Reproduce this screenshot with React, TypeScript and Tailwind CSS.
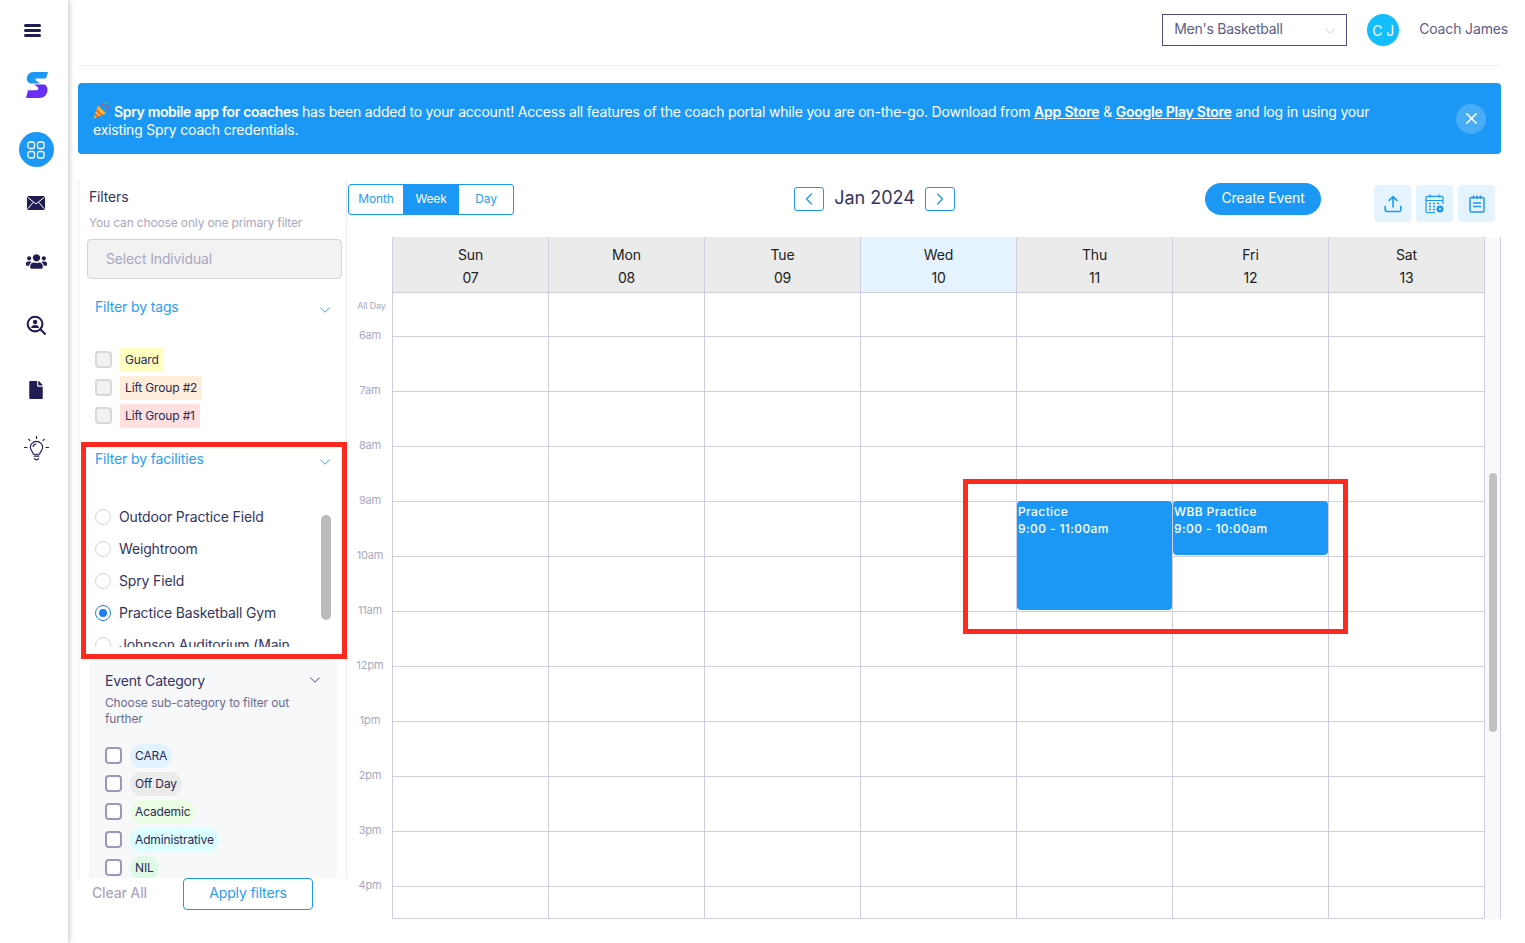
import { ChevronDown, ChevronLeft, ChevronRight, X } from "lucide-react";
import { FaFile, FaUsers } from "react-icons/fa";

const days = [
  { name: "Sun", date: "07" },
  { name: "Mon", date: "08" },
  { name: "Tue", date: "09" },
  { name: "Wed", date: "10", today: true },
  { name: "Thu", date: "11" },
  { name: "Fri", date: "12" },
  { name: "Sat", date: "13" },
];
const hours = ["6am", "7am", "8am", "9am", "10am", "11am", "12pm", "1pm", "2pm", "3pm", "4pm"];
const tags = [
  { label: "Guard", bg: "bg-[#ffffc2]" },
  { label: "Lift Group #2", bg: "bg-[#ffecd9]" },
  { label: "Lift Group #1", bg: "bg-[#ffdfdf]" },
];
const facilities = ["Outdoor Practice Field", "Weightroom", "Spry Field", "Practice Basketball Gym", "Johnson Auditorium (Main"];
const categories = [
  { label: "CARA", bg: "bg-[#e3f2ff]" },
  { label: "Off Day", bg: "bg-[#ebebeb]" },
  { label: "Academic", bg: "bg-[#eafde3]" },
  { label: "Administrative", bg: "bg-[#dcfdff]" },
  { label: "NIL", bg: "bg-[#e0f9e6]" },
];

const Logo = () => (
  <svg width="22" height="26" viewBox="0 0 22 26">
    <path d="M8 0H22L20 6.5H10.5C9.3 6.5 9 8 10 8.6L14 11.5H4.5C1 10 0 7 1.2 4.4C2.3 1.5 4.5 0 8 0Z" fill="#1b98f5" />
    <path d="M0 26H13.5C18 26 21 23 21.5 18.5C21.8 15.5 20.5 13.5 18.5 12.5H8L11.5 15C13 16.2 12.5 18.3 10.5 18.3H2Z" fill="#6a2ff5" />
  </svg>
);

const GridIcon = () => (
  <svg width="18" height="18" viewBox="0 0 18 18" fill="none" stroke="#fff" strokeWidth="1.3">
    <rect x="1" y="1" width="6.5" height="6.5" rx="2" />
    <rect x="10.5" y="1" width="6.5" height="6.5" rx="2" />
    <rect x="1" y="10.5" width="6.5" height="6.5" rx="2" />
    <rect x="10.5" y="10.5" width="6.5" height="6.5" rx="2" />
  </svg>
);

const MailIcon = () => (
  <svg width="18" height="14" viewBox="0 0 18 14">
    <rect width="18" height="14" rx="2" fill="#1f1d53" />
    <path d="M1 1.5L9 8L17 1.5M1 12.5L6.3 6.2M17 12.5L11.7 6.2" fill="none" stroke="#fff" strokeWidth="1" />
  </svg>
);

const SearchPersonIcon = () => (
  <svg width="21" height="21" viewBox="0 0 22 22" fill="none">
    <circle cx="9.5" cy="9.5" r="7.7" stroke="#1f1d53" strokeWidth="2.2" />
    <circle cx="9.5" cy="7.3" r="2.3" fill="#1f1d53" />
    <path d="M5.3 13.5C5.6 11.4 7.3 10.6 9.5 10.6C11.7 10.6 13.4 11.4 13.7 13.5Z" fill="#1f1d53" />
    <path d="M15.2 15.2L20.5 20.5" stroke="#1f1d53" strokeWidth="2.2" />
  </svg>
);

const BulbIcon = () => (
  <svg width="25" height="25" viewBox="0 0 26 26" fill="none" stroke="#1f1d53" strokeWidth="1.2">
    <path d="M9.8 19C9.5 16.5 6.6 15 6.6 11.8C6.6 8.3 9.5 5.6 13 5.6C16.5 5.6 19.4 8.3 19.4 11.8C19.4 15 16.5 16.5 16.2 19Z" />
    <path d="M10 21H16M10.8 23C11.5 25.5 14.5 25.5 15.2 23M13 0V3M4.5 3L6.5 5M21.5 3L19.5 5M0 12H3.5M22.5 12H26" />
    <path d="M9.5 11.5C9.6 9.6 11 8.4 12.8 8.3" />
  </svg>
);

const PartyIcon = () => (
  <svg className="inline-block align-[-2px] mr-[3px]" width="18" height="18" viewBox="0 0 18 18">
    <path d="M0.5 17.5L5 4.5L13 12.5Z" fill="#f7b733" />
    <path d="M2.2 12.6L7 15.5L5 16.2L1.6 14.4ZM3.8 8L10.4 14.4L8.6 15L3.1 10Z" fill="#e2612c" />
    <path d="M9 2L10 5M12 7L16 4M13 10L17 11" stroke="#d9455f" strokeWidth="1.2" />
    <circle cx="13" cy="2" r="1" fill="#7ac143" />
    <circle cx="16" cy="8" r="1" fill="#8e5bd0" />
    <circle cx="6.5" cy="1.5" r="0.8" fill="#3d8fd9" />
  </svg>
);

const UploadIcon = () => (
  <svg width="18" height="18" viewBox="0 0 18 18" fill="none" stroke="#1b98f5" strokeWidth="1.6" strokeLinecap="round" strokeLinejoin="round">
    <path d="M9 12V1.8M5.2 5.4L9 1.6L12.8 5.4" />
    <path d="M1.2 11.5V14.5C1.2 15.8 2 16.5 3.2 16.5H14.8C16 16.5 16.8 15.8 16.8 14.5V11.5" />
  </svg>
);

const CalendarGearIcon = () => (
  <svg width="20" height="20" viewBox="0 0 20 20" fill="none" stroke="#1b98f5" strokeWidth="1.2">
    <path d="M10 18.5H2.5C1.6 18.5 1 17.9 1 17V3.8C1 2.9 1.6 2.3 2.5 2.3H16.5C17.4 2.3 18 2.9 18 3.8V10" />
    <path d="M1 6.5H18M5 0.5V3.8M14 0.5V3.8" />
    <path d="M4 9.5H6M8 9.5H10M12 9.5H14M4 12.5H6M8 12.5H10M4 15.5H6M8 15.5H10" strokeWidth="1.5" />
    <circle cx="15" cy="15" r="2.2" strokeWidth="2.2" />
    <path d="M15 11.5V12.5M15 17.5V18.5M11.5 15H12.5M17.5 15H18.5M12.6 12.6L13.3 13.3M16.7 16.7L17.4 17.4M12.6 17.4L13.3 16.7M16.7 13.3L17.4 12.6" strokeWidth="1.4" />
  </svg>
);

const NotepadIcon = () => (
  <svg width="16" height="18" viewBox="0 0 16 18" fill="none" stroke="#1b98f5" strokeWidth="1.5">
    <rect x="1" y="2.5" width="14" height="14.5" rx="1.5" />
    <path d="M4.5 0.5V4M8 0.5V4M11.5 0.5V4M4 8H12M4 11.5H12" />
  </svg>
);

const IconTile = ({ children }: { children: React.ReactNode }) => (
  <div className="flex h-[37px] w-[37px] items-center justify-center rounded bg-[#e5f3fe]">{children}</div>
);

const Sidebar = () => (
  <aside className="z-10 flex w-[68px] shrink-0 flex-col items-center bg-white pl-1 shadow-[1px_0_5px_rgba(0,0,0,0.25)]">
    <div className="ml-[-8px] mt-[24px] flex h-[13px] w-[17px] flex-col justify-between">
      <span className="h-[3px] rounded-full bg-[#1f1d53]" />
      <span className="h-[3px] rounded-full bg-[#1f1d53]" />
      <span className="h-[3px] rounded-full bg-[#1f1d53]" />
    </div>
    <div className="ml-[2px] mt-[35px] leading-none"><Logo /></div>
    <div className="mt-[34px] flex h-[35px] w-[35px] items-center justify-center rounded-full bg-[#1b98f5]"><GridIcon /></div>
    <div className="mt-[29px]"><MailIcon /></div>
    <FaUsers className="mt-[41px] text-[#1f1d53]" size={21} />
    <div className="mt-[43px] ml-[1px]"><SearchPersonIcon /></div>
    <FaFile className="mt-[45px] text-[#1f1d53]" size={18} />
    <div className="mt-[37px]"><BulbIcon /></div>
  </aside>
);

const TopBar = () => (
  <header className="flex h-[66px] shrink-0 items-start justify-end border-b border-[#eeeeee] pt-[14px] text-sm text-[#5d5d85]">
    <div className="flex h-[32px] w-[185px] items-center justify-between border border-[#4e4e80] pb-[2px] pl-[11px] pr-[7px]">
      <span className="tracking-[-0.25px]">Men's Basketball</span>
      <ChevronDown size={18} strokeWidth={1} className="mt-[3px] text-[#bdbdc9]" />
    </div>
    <div className="ml-[20px] flex h-[32px] w-[32px] items-center justify-center rounded-full bg-[#14bdfb] pt-[2px] text-white">C J</div>
    <span className="ml-[20px] mr-[-7px] mt-[5px] leading-[20px]">Coach James</span>
  </header>
);

const Banner = () => (
  <div className="mt-[17px] flex h-[71px] shrink-0 items-center justify-between rounded bg-[#1b98f5] pl-[15px] pr-[15px] text-sm leading-[18px] tracking-[-0.19px] text-white">
    <p className="mt-[2px] w-[1300px]">
      <PartyIcon />
      <b className="font-semibold tracking-[-0.35px]">Spry mobile app for coaches</b> has been added to your account! Access all features of the coach portal while you are on-the-go. Download from{" "}
      <b className="font-semibold underline">App Store</b> &amp; <b className="font-semibold underline tracking-[-0.25px]">Google Play Store</b> and log in using your existing Spry coach credentials.
    </p>
    <div className="flex h-[30px] w-[30px] items-center justify-center rounded-full bg-white/20">
      <X size={19} />
    </div>
  </div>
);

const FilterHeading = ({ label }: { label: string }) => (
  <div className="flex items-start justify-between pl-[16px] pr-[12px] text-sm leading-[18px] text-[#2b9cf2]">
    <span>{label}</span>
    <ChevronDown size={18} strokeWidth={1.2} className="mt-[3px]" />
  </div>
);

const Filters = () => (
  <section className="relative flex w-[269px] shrink-0 flex-col">
    <div className="h-[698px] overflow-hidden border-x border-[#eeeeee] pt-[8px]">
      <h3 className="pl-[10px] text-sm leading-[18px] text-[#34345f]">Filters</h3>
      <p className="mt-[9px] pl-[10px] text-xs leading-[16px] text-[#a9a8bf]">You can choose only one primary filter</p>
      <div className="ml-[8px] mt-[8px] flex h-[40px] w-[255px] items-center rounded border border-[#d5d5d5] bg-[#f2f2f2] pl-[18px] text-sm text-[#a9a8bf]">Select Individual</div>
      <div className="mt-[19px]"><FilterHeading label="Filter by tags" /></div>
      <div className="mt-[29px] flex flex-col gap-[4px] pl-[16px]">
        {tags.map((t) => (
          <div key={t.label} className="flex items-center">
            <span className="-mt-[1px] h-[17px] w-[17px] rounded-sm border-2 border-[#d8d8d8] bg-[#f2f2f2]" />
            <span className={`ml-[8px] flex h-[24px] items-center px-[5px] text-xs text-[#2a2a55] ${t.bg}`}>{t.label}</span>
          </div>
        ))}
      </div>
      <div className="mt-[22px]"><FilterHeading label="Filter by facilities" /></div>
      <div className="relative mt-[36px] h-[140px] overflow-hidden pl-[16px]">
        <div className="flex flex-col gap-[12px]">
          {facilities.map((f, i) => (
            <div key={f} className="flex h-[20px] items-center text-sm text-[#34345f]">
              {i === 3 ? (
                <span className="flex h-[16px] w-[16px] items-center justify-center rounded-full border border-[#1b7ff5]">
                  <span className="h-[8px] w-[8px] rounded-full bg-[#1b7ff5]" />
                </span>
              ) : (
                <span className="h-[16px] w-[16px] rounded-full border border-[#d5d5d5]" />
              )}
              <span className="ml-[8px] whitespace-nowrap">{f}</span>
            </div>
          ))}
        </div>
        <span className="absolute right-[15px] top-[8px] h-[105px] w-[10px] rounded-full bg-[#bbbbbb]" />
      </div>
      <div className="ml-[10px] mt-[13px] h-[300px] w-[248px] rounded-t-lg bg-[#f7f8fa] pl-[16px] pr-[13px] pt-[11px]">
        <div className="flex items-start justify-between text-sm leading-[20px] text-[#34345f]">
          <span>Event Category</span>
          <ChevronDown size={18} strokeWidth={1.2} />
        </div>
        <p className="mt-[4px] text-xs leading-[16px] text-[#6c6c8f]">Choose sub-category to filter out further</p>
        <div className="mt-[17px] flex flex-col gap-[4px]">
          {categories.map((c) => (
            <div key={c.label} className="flex items-center">
              <span className="-mt-[1px] h-[17px] w-[17px] rounded-sm border-2 border-[#9a98b5] bg-white" />
              <span className={`ml-[8px] flex h-[24px] items-center rounded-full px-[5px] text-xs text-[#2a2a55] ${c.bg}`}>{c.label}</span>
            </div>
          ))}
        </div>
      </div>
    </div>
    <div className="flex items-center pl-[14px]">
      <span className="w-[91px] pb-[2px] text-sm font-medium text-[#a9a8bf]">Clear All</span>
      <button className="h-[32px] w-[130px] rounded border border-[#1b98f5] pb-[2px] text-sm text-[#2b9cf2]">Apply filters</button>
    </div>
    <div className="pointer-events-none absolute left-[3px] top-[262px] h-[217px] w-[266px] border-[5px] border-[#ff2a1f]" />
  </section>
);

const CalendarToolbar = () => (
  <div className="flex h-[56px] shrink-0 items-start">
    <div className="mt-[3px] flex h-[31px] w-[166px] overflow-hidden rounded-[3px] border border-[#1b98f5] pb-[1px] text-xs text-[#2b9cf2]">
      <span className="flex w-[54px] items-center justify-center">Month</span>
      <span className="-mb-[1px] flex w-[56px] items-center justify-center bg-[#1b98f5] pb-[1px] text-white">Week</span>
      <span className="flex flex-1 items-center justify-center">Day</span>
    </div>
    <div className="ml-[280px] mt-[6px] flex h-[24px] w-[161px] items-center justify-between">
      <span className="flex h-[24px] w-[30px] items-center justify-center rounded-[3px] border border-[#1b98f5] text-[#1b98f5]"><ChevronLeft size={20} strokeWidth={1.5} /></span>
      <span className="pb-[2px] text-lg tracking-normal text-[#34345f]">Jan 2024</span>
      <span className="flex h-[24px] w-[30px] items-center justify-center rounded-[3px] border border-[#1b98f5] text-[#1b98f5]"><ChevronRight size={20} strokeWidth={1.5} /></span>
    </div>
    <button className="ml-[250px] mt-[2px] h-[32px] w-[116px] rounded-full bg-[#1b98f5] pb-[2px] text-sm text-white">Create Event</button>
    <div className="ml-[53px] mt-[4px] flex gap-[5px]">
      <IconTile><UploadIcon /></IconTile>
      <IconTile><CalendarGearIcon /></IconTile>
      <IconTile><NotepadIcon /></IconTile>
    </div>
  </div>
);

const DayColumn = ({ index }: { index: number }) => (
  <div className="relative flex w-[156px] flex-col border-r border-[#d0cde0]">
    <div className="h-[44px] border-b border-[#d0cde0]" />
    {hours.map((h, i) => (
      <div key={h} className={`border-b border-[#d0cde0] ${i === 10 ? "h-[32px]" : "h-[55px]"}`} />
    ))}
    {index === 4 && (
      <div className="absolute left-0 right-0 top-[208px] h-[109px] rounded-sm bg-[#1b98f5] pl-[1px] pt-[2px] text-xs font-medium leading-[17px] tracking-[0.4px] text-white">
        Practice<br />9:00 - 11:00am
      </div>
    )}
    {index === 5 && (
      <div className="absolute left-0 right-0 top-[208px] h-[54px] rounded-sm bg-[#1b98f5] pl-[1px] pt-[2px] text-xs font-medium leading-[17px] tracking-[0.4px] text-white">
        WBB Practice<br />9:00 - 10:00am
      </div>
    )}
  </div>
);

const Calendar = () => (
  <section className="relative ml-[1px] mt-[1px] flex min-w-0 flex-1 flex-col">
    <CalendarToolbar />
    <div className="flex">
      <div className="w-[44px] shrink-0">
        <div className="h-[55px]" />
        <div className="h-[36px] pl-[3px] pt-[7px] text-center text-[9px] leading-[14px] text-[#a9a8bf]">All Day</div>
        {hours.map((h, i) => (
          <div key={h} className={`text-center text-[11px] leading-[14px] text-[#a9a8bf] ${i === 10 ? "h-[32px]" : "h-[55px]"}`}>{h}</div>
        ))}
      </div>
      <div className="flex flex-col border-l border-[#d0cde0]">
        <div className="flex h-[56px]">
          {days.map((d) => (
            <div key={d.name} className={`flex w-[156px] flex-col items-center border-b border-r border-[#d0cde0] pt-[6px] text-sm leading-[23px] text-[#222222] ${d.today ? "bg-[#e5f3fe]" : "bg-[#ebebeb]"}`}>
              <span>{d.name}</span>
              <span>{d.date}</span>
            </div>
          ))}
        </div>
        <div className="flex">
          {days.map((d, i) => <DayColumn key={d.name} index={i} />)}
        </div>
      </div>
      <div className="relative h-[682px] w-[16px] border-r border-[#d0cde0] bg-[#f9f9f9]">
        <span className="absolute left-[4px] top-[236px] h-[259px] w-[8px] rounded-full bg-[#c1c1c1]" />
      </div>
    </div>
    <div className="pointer-events-none absolute left-[615px] top-[298px] h-[155px] w-[385px] border-[5px] border-[#ff2a1f]" />
  </section>
);

export default function App() {
  return (
    <div className="flex h-[943px] w-[1525px] overflow-hidden bg-white tracking-[-0.15px] [font-family:Inter,sans-serif]">
      <Sidebar />
      <main className="flex min-w-0 flex-1 flex-col pl-[10px] pr-[24px]">
        <TopBar />
        <Banner />
        <div className="mt-[26px] flex">
          <Filters />
          <Calendar />
        </div>
      </main>
    </div>
  );
}
